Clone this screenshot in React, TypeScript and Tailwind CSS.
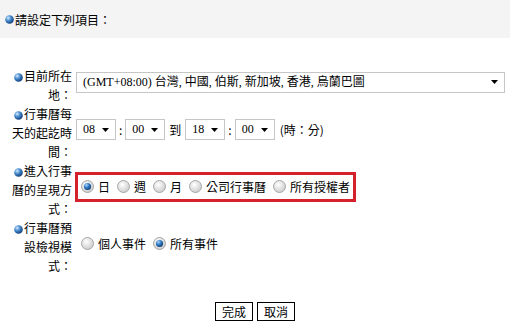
import { useId } from 'react';

const Bullet = () => {
  const id = useId();
  return (
    <svg width="9" height="9" viewBox="0 0 9 9" className="inline-block mr-[1px] align-[-1px]">
      <defs>
        <radialGradient id={id} cx="35%" cy="32%" r="70%">
          <stop offset="0%" stopColor="#d6ecff" />
          <stop offset="45%" stopColor="#4a8fd0" />
          <stop offset="100%" stopColor="#123f7a" />
        </radialGradient>
      </defs>
      <circle cx="4.5" cy="4.5" r="4.3" fill={`url(#${id})`} />
    </svg>
  );
};

const Radio = ({ checked = false }: { checked?: boolean }) => {
  const id = useId();
  return (
    <svg width="13" height="13" viewBox="0 0 13 13" className="shrink-0">
      <defs>
        <radialGradient id={`${id}a`} cx="40%" cy="35%" r="70%">
          <stop offset="0%" stopColor="#ffffff" />
          <stop offset="100%" stopColor="#c9c9c9" />
        </radialGradient>
        <radialGradient id={`${id}b`} cx="35%" cy="30%" r="75%">
          <stop offset="0%" stopColor="#a9d6ff" />
          <stop offset="50%" stopColor="#2f79c0" />
          <stop offset="100%" stopColor="#0d3a70" />
        </radialGradient>
      </defs>
      <circle cx="6.5" cy="6.5" r="6" fill={`url(#${id}a)`} stroke="#a7a7a7" strokeWidth="1" />
      {checked && <circle cx="6.5" cy="6.5" r="3.6" fill={`url(#${id}b)`} />}
    </svg>
  );
};

const Select = ({ value, className }: { value: string; className: string }) => (
  <div
    className={`flex items-center justify-between h-[21px] border border-[#c6c6c6] bg-white pl-[6px] pr-[6px] font-['Liberation_Serif','Noto_Sans_CJK_TC',serif] text-[12px] ${className}`}
  >
    <span className="whitespace-nowrap">{value}</span>
    <svg width="7" height="4" viewBox="0 0 7 4" className="shrink-0">
      <path d="M0 0h7L3.5 4z" fill="#000" />
    </svg>
  </div>
);

const Option = ({ label, checked }: { label: string; checked?: boolean }) => (
  <label className="flex items-center gap-[4px] mr-[7px] last:mr-0 whitespace-nowrap shrink-0">
    <Radio checked={checked} />
    <span>{label}</span>
  </label>
);

const Row = ({ lines, children }: { lines: string[]; children: React.ReactNode }) => (
  <div className="flex">
    <div className="w-[60px] ml-[12px] text-right shrink-0">
      {lines.map((l, i) => (
        <div key={i} className="whitespace-nowrap">
          {i === 0 && <Bullet />}
          {l}
        </div>
      ))}
    </div>
    <div className="flex items-center ml-[4px] pb-[6px]">{children}</div>
  </div>
);

export default function App() {
  return (
    <div className="w-[510px] h-[336px] bg-white text-black text-[12px] leading-[19px] font-['Noto_Sans_CJK_TC','Noto_Sans_CJK_SC',sans-serif]">
      <div className="h-[38px] bg-[#f4f4f4] flex items-center pl-[5px]">
        <Bullet />
        <span>請設定下列項目：</span>
      </div>

      <div className="pt-[28px]">
        <Row lines={['目前所在', '地：']}>
          <Select value="(GMT+08:00) 台灣, 中國, 伯斯, 新加坡, 香港, 烏蘭巴圖" className="w-[429px] h-[20px]" />
        </Row>

        <Row lines={['行事曆每', '天的起訖時', '間：']}>
          <div className="flex items-center gap-[3px]">
            <Select value="08" className="w-[40px]" />
            <span>:</span>
            <Select value="00" className="w-[40px]" />
            <span className="mx-[1px]">到</span>
            <Select value="18" className="w-[40px]" />
            <span>:</span>
            <Select value="00" className="w-[40px]" />
            <span className="ml-[2px]">(時：分)</span>
          </div>
        </Row>

        <Row lines={['進入行事', '曆的呈現方', '式：']}>
          <div className="flex items-center border-[3px] border-[#d4212b] h-[30px] px-[3px] -ml-[1px]">
            <Option label="日" checked />
            <Option label="週" />
            <Option label="月" />
            <Option label="公司行事曆" />
            <Option label="所有授權者" />
          </div>
        </Row>

        <Row lines={['行事曆預', '設檢視模', '式：']}>
          <div className="flex items-center ml-[5px]">
            <Option label="個人事件" />
            <Option label="所有事件" checked />
          </div>
        </Row>
      </div>

      <div className="flex justify-center gap-[4px] mt-[27px]">
        <button className="w-[38px] h-[19px] border border-black bg-white text-[12px] leading-[17px]">完成</button>
        <button className="w-[38px] h-[19px] border border-black bg-white text-[12px] leading-[17px]">取消</button>
      </div>
    </div>
  );
}
